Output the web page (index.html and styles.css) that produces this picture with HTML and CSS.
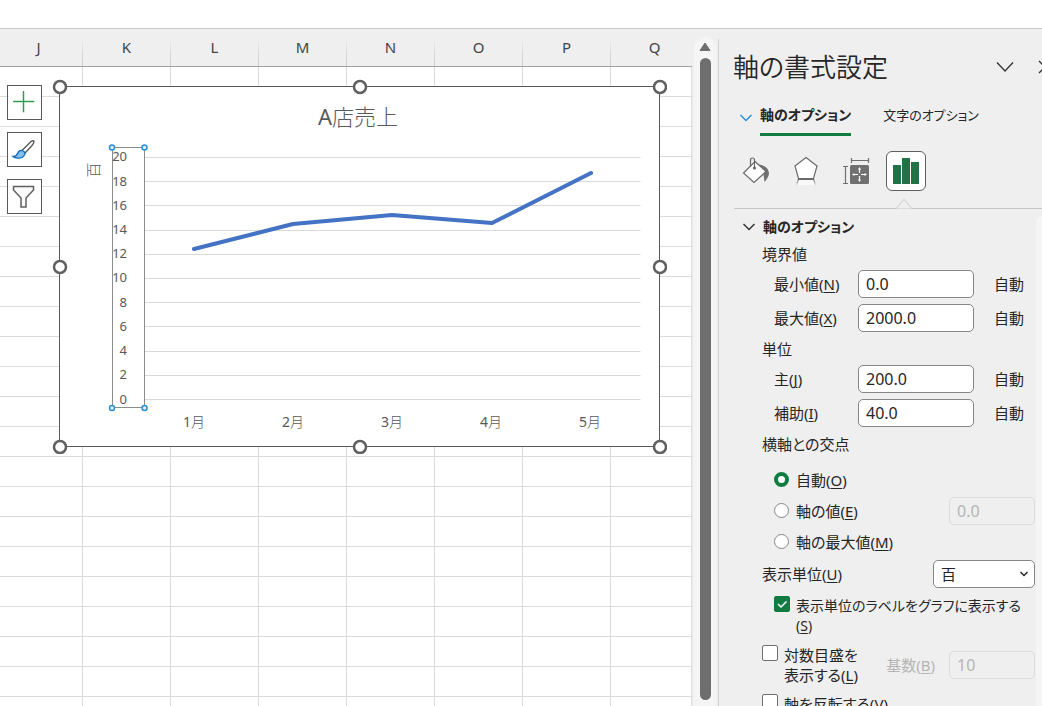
FILE: index.html
```html
<!DOCTYPE html>
<html lang="ja">
<head>
<meta charset="utf-8">
<title>軸の書式設定</title>
<link rel="stylesheet" href="styles.css">
</head>
<body>
<div class="ribbon-edge"></div>
<main class="workspace">
  <section class="sheet">
    <div class="columns">
      <span class="col col-first">J</span><span class="col">K</span><span class="col">L</span><span class="col">M</span><span class="col">N</span><span class="col">O</span><span class="col">P</span><span class="col">Q</span>
    </div>
    <div class="cells">
      <div class="chart-tools">
        <button class="tool" type="button" aria-label="グラフ要素">
          <svg width="33" height="33" viewBox="0 0 33 33"><path d="M5.500 15.500h21M15.500 5.500v21" stroke="#9ad0a8" stroke-width="2" fill="none"/><path d="M5 15.500h21M15.500 5v21" stroke="#2e9b4f" fill="none"/></svg>
        </button>
        <button class="tool" type="button" aria-label="グラフ スタイル">
          <svg width="33" height="33" viewBox="0 0 33 33"><path d="M14 17.500L23 8.500Q25.500 7 26 8.500Q26 10 24 12.500L17 20Z" fill="#fff" stroke="#555" stroke-width="1.300"/><path d="M5 23.500Q8.500 23.500 9.500 20.500Q11 17 14 17.500Q18 19 16.500 22Q14.500 25.500 9.500 25.200Q6.500 25 5 23.500Z" fill="#83beec" stroke="#0f6cbd" stroke-width="1.300"/></svg>
        </button>
        <button class="tool" type="button" aria-label="グラフ フィルター">
          <svg width="33" height="33" viewBox="0 0 33 33"><path d="M5.500 6.500h20v3.500l-7.500 8v9h-5v-9l-7.500-8z" fill="#fafafa" stroke="#5f5f5f" stroke-width="1.500"/></svg>
        </button>
      </div>
      <svg class="chart" width="615" height="375" viewBox="52 79 615 375" role="img" aria-label="A店売上">
        <rect x="59.500" y="86.500" width="600" height="360" fill="#fff" stroke="#595959"/>
        <text class="chart-title" x="358" y="125"><tspan class="latin">A</tspan>店売上</text>
        <path class="gridlines" d="M145 157.500H640.500M145 181.500H640.500M145 205.500H640.500M145 230.500H640.500M145 254.500H640.500M145 278.500H640.500M145 302.500H640.500M145 326.500H640.500M145 351.500H640.500M145 375.500H640.500M145 399.500H640.500"/>
        <polyline class="series" points="194,249 293,224 392,215 492,223 591,173"/>
        <rect class="axis-box" x="112.500" y="147.500" width="32" height="260"/>
        <g class="axis-values">
          <text x="127" y="161">20</text><text x="127" y="186">18</text><text x="127" y="210">16</text><text x="127" y="234">14</text><text x="127" y="258">12</text><text x="127" y="282">10</text><text x="127" y="307">8</text><text x="127" y="331">6</text><text x="127" y="355">4</text><text x="127" y="379">2</text><text x="127" y="404">0</text>
        </g>
        <g class="axis-months">
          <text x="194" y="427"><tspan class="latin">1</tspan>月</text><text x="293" y="427"><tspan class="latin">2</tspan>月</text><text x="392" y="427"><tspan class="latin">3</tspan>月</text><text x="491" y="427"><tspan class="latin">4</tspan>月</text><text x="590" y="427"><tspan class="latin">5</tspan>月</text>
        </g>
        <text class="unit-label" transform="translate(99 170) rotate(-90)">百</text>
        <g class="axis-handles"><circle cx="112" cy="147.500" r="2.500"/><circle cx="144.500" cy="147.500" r="2.500"/><circle cx="112" cy="408" r="2.500"/><circle cx="144.500" cy="408" r="2.500"/></g>
        <g class="handles"><circle cx="60" cy="87" r="6"/><circle cx="360" cy="87" r="6"/><circle cx="660" cy="87" r="6"/><circle cx="60" cy="267" r="6"/><circle cx="660" cy="267" r="6"/><circle cx="60" cy="447" r="6"/><circle cx="360" cy="447" r="6"/><circle cx="660" cy="447" r="6"/></g>
      </svg>
    </div>
  </section>
  <div class="scrollbar">
    <svg width="12" height="10" viewBox="0 0 12 10"><path d="M6 1L11 8.500H1Z" fill="#6e6e6e" stroke="#6e6e6e" stroke-linejoin="round"/></svg>
    <div class="thumb"></div>
  </div>
  <aside class="pane">
    <header class="pane-head">
      <h1 class="pane-title">軸の書式設定</h1>
      <button class="plain" type="button" aria-label="オプション"><svg width="18" height="12" viewBox="0 0 18 12"><path d="M1 1.500L9 10L17 1.500" fill="none" stroke="#333" stroke-width="1.300"/></svg></button>
      <button class="plain close" type="button" aria-label="閉じる"><svg width="14" height="14" viewBox="0 0 14 14"><path d="M1 1L13 13M13 1L1 13" fill="none" stroke="#333" stroke-width="1.300"/></svg></button>
    </header>
    <nav class="tabs">
      <svg class="tab-chevron" width="12" height="8" viewBox="0 0 12 8"><path d="M.5 1L6 6.500L11.500 1" fill="none" stroke="#2b8fd8" stroke-width="1.500"/></svg>
      <button class="tab tab-active" type="button">軸のオプション</button>
      <button class="tab" type="button">文字のオプション</button>
    </nav>
    <div class="icons">
      <button class="icon" type="button" aria-label="塗りつぶしと線"><svg width="40" height="40" viewBox="0 0 40 40"><path d="M19 13.500Q32 13 33 22Q33 26 28.500 31Q28 24 26 19Z" fill="#707070"/><path d="M19 10.500L30 20.500L18 31.500L7.500 22Z" fill="#fff" stroke="#6a6a6a" stroke-width="1.200"/><path d="M14.500 16V9Q14.500 7 16.500 7Q18.500 7 18.500 9V16" fill="none" stroke="#6a6a6a" stroke-width="1.200"/><circle cx="18.500" cy="17" r="1.600" fill="#6a6a6a"/></svg></button>
      <button class="icon" type="button" aria-label="効果"><svg width="40" height="40" viewBox="0 0 40 40"><defs><linearGradient id="fade" x1="0" y1="0" x2="0" y2="1"><stop offset="0" stop-color="#707070"/><stop offset="1" stop-color="#dedede"/></linearGradient></defs><path d="M13 29H27L29 34H11Z" fill="#f9f9f9"/><path d="M12.500 28L10.500 34M27.500 28L29.500 34" stroke="url(#fade)" stroke-width="1.200"/><path d="M20 6.500L31 15L27.500 27.500H12.500L9 15Z" fill="#fff" stroke="#6a6a6a" stroke-width="1.200"/><path d="M12 28H28" stroke="#6a6a6a" stroke-width="2"/></svg></button>
      <button class="icon" type="button" aria-label="サイズとプロパティ"><svg width="40" height="40" viewBox="0 0 40 40"><rect x="14" y="14" width="19" height="19" rx="1.500" fill="#707070"/><path d="M15.500 9.500H32.500M15.500 7V12M32.500 7V12M9.500 15.500V32.500M7 15.500H12M7 32.500H12" stroke="#707070" stroke-width="1.200"/><path d="M23.500 17V30M17 23.500H30" stroke="#fff" stroke-width="1.200" stroke-dasharray="5 3"/><path d="M22 18.500L23.500 16L25 18.500ZM22 28.500L23.500 31L25 28.500ZM18.500 22L16 23.500L18.500 25ZM28.500 22L31 23.500L28.500 25Z" fill="#fff"/></svg></button>
      <button class="icon icon-active" type="button" aria-label="軸のオプション"><svg width="38" height="38" viewBox="0 0 38 38"><path d="M6 13H14V32H6ZM15 6H23V32H15ZM24 10H32V32H24Z" fill="#217346"/></svg></button>
    </div>
    <div class="divider"><svg width="18" height="12" viewBox="0 0 18 12"><path d="M.5 11.500L9 1.500L17.500 11.500" fill="#efefef" stroke="#c8c8c8"/></svg></div>
    <div class="options-wrap">
      <form class="options">
        <h2 class="section"><svg width="12" height="8" viewBox="0 0 12 8"><path d="M.5 1L6 6.500L11.500 1" fill="none" stroke="#333" stroke-width="1.500"/></svg>軸のオプション</h2>
        <h3 class="group">境界値</h3>
        <div class="fields">
          <label for="min">最小値(<u>N</u>)</label><input class="box" id="min" value="0.0"><span>自動</span>
          <label for="max">最大値(<u>X</u>)</label><input class="box" id="max" value="2000.0"><span>自動</span>
        </div>
        <h3 class="group">単位</h3>
        <div class="fields">
          <label for="major">主(<u>J</u>)</label><input class="box" id="major" value="200.0"><span>自動</span>
          <label for="minor">補助(<u>I</u>)</label><input class="box" id="minor" value="40.0"><span>自動</span>
        </div>
        <h3 class="group">横軸との交点</h3>
        <div class="radios">
          <div class="radio-row"><input class="radio" type="radio" name="cross" id="auto" checked><label for="auto">自動(<u>O</u>)</label></div>
          <div class="radio-row"><input class="radio" type="radio" name="cross" id="value"><label for="value">軸の値(<u>E</u>)</label><input class="box box-small" value="0.0" aria-label="軸の値" disabled></div>
          <div class="radio-row"><input class="radio" type="radio" name="cross" id="maximum"><label for="maximum">軸の最大値(<u>M</u>)</label></div>
        </div>
        <div class="unit-row"><label for="unit">表示単位(<u>U</u>)</label>
          <span class="select-wrap"><select class="select" id="unit"><option>百</option></select><svg class="select-arrow" width="8" height="6" viewBox="0 0 8 6"><path d="M.5 1L4 4.500L7.500 1" fill="none" stroke="#222" stroke-width="1.500"/></svg></span></div>
        <div class="check-row check-inner"><input class="check" type="checkbox" id="show" checked><label class="compact" for="show">表示単位のラベルをグラフに表示する<br>(<u>S</u>)</label></div>
        <div class="check-row"><input class="check" type="checkbox" id="log"><label for="log">対数目盛を<br>表示する(<u>L</u>)</label>
          <span class="base"><label class="muted" for="base">基数(<u>B</u>)</label><input class="box box-small" id="base" value="10" disabled></span></div>
        <div class="check-row"><input class="check" type="checkbox" id="reverse"><label for="reverse">軸を反転する(<u>V</u>)</label></div>
      </form>
      <div class="gutter"></div>
    </div>
  </aside>
</main>
</body>
</html>
```
FILE: styles.css
```css
* { box-sizing: border-box; }
body {
  margin: 0;
  height: 100vh;
  display: flex;
  flex-direction: column;
  overflow: hidden;
  background: #fff;
  color: #262626;
  font: 15px/20px "Noto Sans", "Noto Sans CJK JP", sans-serif;
  font-feature-settings: "palt";
}
button, input, select { font: inherit; color: inherit; margin: 0; }
button { padding: 0; border: 0; background: none; }
svg { display: block; }
u { text-underline-offset: 2px; }

.ribbon-edge { flex: none; height: 29px; border-bottom: 1px solid #c9c9c9; }
.workspace { flex: 1; min-height: 0; display: flex; background: #efefef; }

.sheet { flex: 1; min-width: 0; display: flex; flex-direction: column; overflow: hidden; }
.columns { flex: none; display: flex; height: 38px; border-bottom: 1px solid #a3a3a3; color: #444; }
.col {
  flex: none;
  width: 88px;
  line-height: 37px;
  text-align: center;
  border-right: 1px solid;
  border-image: linear-gradient(#efefef 25%, #c8c8c8) 1;
}
.col-first { width: 83px; padding-right: 5px; }
.cells {
  flex: 1;
  position: relative;
  border-right: 1px solid #dcdcdc;
  background:
    repeating-linear-gradient(to right, transparent 0 87px, #dcdcdc 87px 88px) -5px 0 / 1760px 100%,
    repeating-linear-gradient(to bottom, #fff 0 29px, #dcdcdc 29px 30px);
}
.chart-tools { position: absolute; left: 7px; top: 18px; display: flex; flex-direction: column; gap: 12px; }
.tool { width: 35px; height: 35px; border: 1px solid #595959; background: #fff; }
.chart { position: absolute; left: 52px; top: 12px; font-family: "Noto Sans", "Noto Sans CJK JP", sans-serif; fill: #595959; }
.chart-title { font-size: 22px; text-anchor: middle; font-weight: 300; }
.latin { font-weight: 400; }
.gridlines { stroke: #d9d9d9; fill: none; }
.series { fill: none; stroke: #4472c4; stroke-width: 4; stroke-linecap: round; stroke-linejoin: round; }
.axis-box { fill: none; stroke: #8c8c8c; }
.axis-values { font-size: 13px; text-anchor: end; }
.axis-months { font-size: 14px; text-anchor: middle; font-weight: 300; }
.unit-label { font-size: 15px; font-weight: 300; text-anchor: middle; }
.axis-handles { fill: #e1f0fb; stroke: #2b8fd8; stroke-width: 1.500; }
.handles { fill: #fff; stroke: #606060; stroke-width: 2.500; }

.scrollbar {
  flex: none;
  width: 22px;
  margin: 8px 2px 0;
  padding: 5px 0 6px;
  display: flex;
  flex-direction: column;
  align-items: center;
  gap: 6px;
  border-radius: 11px 11px 0 0;
  background: #f5f5f5;
}
.thumb { flex: 1; width: 11px; border-radius: 6px; background: #6e6e6e; }

.pane {
  flex: none;
  width: 324px;
  margin-top: 10px;
  border-left: 1px solid #d2d2d2;
  display: flex;
  flex-direction: column;
  overflow: hidden;
}
.pane-head { flex: none; display: flex; align-items: center; height: 56px; padding-left: 14px; }
.pane-title { flex: 1; margin: 0; font-size: 26px; line-height: 36px; font-weight: 350; }
.plain { flex: none; }
.close { margin: 0 -10px 0 24px; }
.tabs { flex: none; display: flex; align-items: center; height: 41px; padding-left: 21px; }
.tab-chevron { margin: 4px 8px 0 0; }
.tab { height: 41px; padding-top: 2px; font-size: 13px; border-bottom: 3px solid transparent; white-space: nowrap; }
.tab-active { font-size: 14px; font-weight: 700; border-bottom-color: #107c41; margin-right: 32px; }
.icons { flex: none; display: flex; gap: 10px; margin-top: 15px; padding-left: 17px; }
.icon { width: 40px; height: 40px; }
.icon-active { border: 1px solid #5f5f5f; border-radius: 6px; background: #fff; }
.divider { flex: none; height: 18px; margin-left: 15px; padding: 7px 0 0 161px; background: linear-gradient(#c8c8c8, #c8c8c8) 0 100% / 100% 1px no-repeat; }
.divider svg { height: 11px; }

.options-wrap { flex: 1; min-height: 0; display: flex; }
.gutter { flex: none; width: 6px; margin-top: 7px; border-radius: 6px 0 0 0; background: #f5f5f5; }
.options { flex: 1; min-width: 0; padding: 8px 1px 0 43px; }
.section { display: flex; align-items: center; gap: 8px; margin: 0 0 0 -19px; font-size: 14px; line-height: 20px; }
.group { margin: 7px 0 6px; font-size: 15px; line-height: 20px; font-weight: 400; }
.fields { display: grid; grid-template-columns: 84px 116px 1fr; row-gap: 6px; padding-left: 12px; align-items: center; }
.fields span { padding-left: 20px; }
.box, .select {
  width: 116px;
  height: 28px;
  padding: 0 7px;
  border: 1px solid #868686;
  border-radius: 5px;
  background: #fff;
}
.box { font-size: 16px; }
.box-small { width: 86px; margin-left: auto; }
.box:disabled { border-color: #dcdcdc; background: #efefef; color: #b5b5b5; }
.radios { margin-top: 10px; padding-left: 12px; }
.radio-row { display: flex; align-items: center; gap: 7px; height: 31px; }
.radio { appearance: none; flex: none; width: 15px; height: 15px; border: 1px solid #868686; border-radius: 50%; background: #fff; }
.radio:checked { border: 4px solid #107c41; }
.unit-row { display: flex; align-items: center; justify-content: space-between; margin-top: 3px; }
.select-wrap { position: relative; }
.select { display: block; appearance: none; width: 102px; }
.select-arrow { position: absolute; right: 7px; top: 11px; pointer-events: none; }
.check-row { display: flex; align-items: flex-start; gap: 6px; margin-top: 9px; white-space: nowrap; }
.check-inner { margin-top: 8px; padding-left: 12px; }
.compact { font-size: 14px; }
.check { appearance: none; flex: none; width: 16px; height: 16px; border: 1px solid #707070; border-radius: 2px; background: #fff; }
.check:checked {
  border-color: #107c41;
  background: #107c41 url("data:image/svg+xml,%3Csvg xmlns='http://www.w3.org/2000/svg' viewBox='0 0 14 14'%3E%3Cpath d='M3 7l3 3 5.500-5.500' fill='none' stroke='white' stroke-width='1.500'/%3E%3C/svg%3E") center / 14px;
}
.base { display: flex; align-items: center; gap: 14px; height: 40px; margin-left: auto; }
.muted { color: #b5b5b5; }
```
